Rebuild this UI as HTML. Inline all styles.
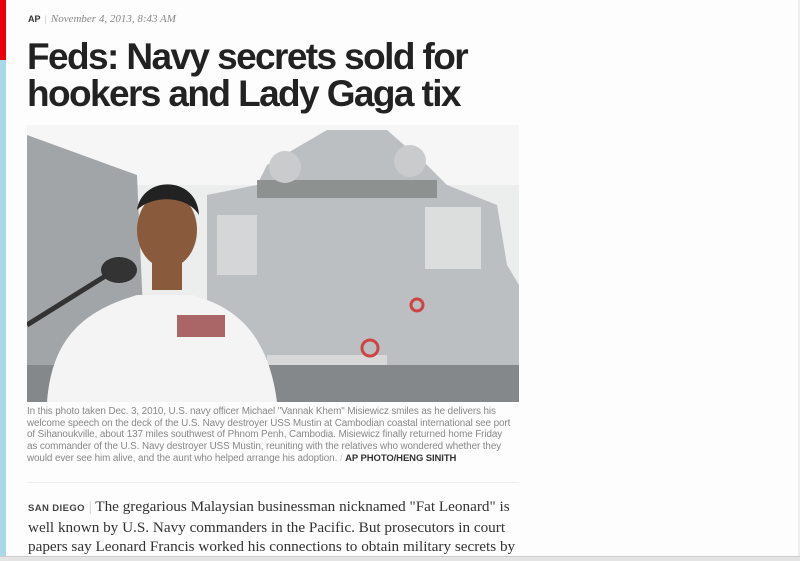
<!DOCTYPE html>
<html><head><meta charset="utf-8"><style>
body{margin:0;width:800px;height:560px;overflow:hidden;background:#fdfdfd;position:relative;font-family:"Liberation Sans",sans-serif}
.red{position:absolute;left:0;top:0;width:6px;height:60px;background:#e8000b}
.blue{position:absolute;left:0;top:60px;width:6px;height:500px;background:#a9d8e8}
.meta{position:absolute;left:28px;top:13px;font-size:9px;color:#333;font-weight:bold}
.meta i{font-family:"Liberation Serif",serif;font-weight:normal;color:#888;font-size:11px;margin-left:4px}
.meta span{color:#ccc;font-weight:normal;margin-left:4px}
h1{position:absolute;left:27px;top:38px;margin:0;font-size:37px;line-height:37px;letter-spacing:-1.6px;color:#222;font-weight:bold;width:520px}
.photo{position:absolute;left:27px;top:125px;width:492px;height:277px}
.cap{position:absolute;left:27px;top:406px;width:500px;font-size:9.9px;line-height:11.7px;color:#888;letter-spacing:-0.1px;white-space:nowrap}
.cap b{color:#333;font-size:9.5px}
.hr{position:absolute;left:27px;top:482px;width:492px;height:1px;background:#eee}
.body{position:absolute;left:28px;top:497px;width:492px;font-family:"Liberation Serif",serif;font-size:15.2px;line-height:19px;color:#333;height:59px;overflow:hidden}
.body small{font-family:"Liberation Sans",sans-serif;font-size:9.5px;font-weight:bold;color:#444;letter-spacing:.4px}
.bot{position:absolute;left:0;top:556px;width:800px;height:4px;background:#e4e4e4;border-top:1px solid #ccc}
.sb{position:absolute;left:798px;top:0;width:2px;height:556px;background:#eee}
</style></head><body>
<div class="red"></div><div class="blue"></div><div class="sb"></div>
<div class="meta">AP<span>|</span><i>November 4, 2013, 8:43 AM</i></div>
<h1>Feds: Navy secrets sold for hookers and Lady Gaga tix</h1>
<svg class="photo" viewBox="0 0 492 277">
<rect width="492" height="277" fill="#eceded"/>
<rect x="0" y="0" width="492" height="60" fill="#f6f6f7"/>
<polygon points="0,10 110,50 120,277 0,277" fill="#a2a5a7"/>
<polygon points="180,70 230,60 240,40 300,5 360,5 400,40 420,60 470,80 480,140 492,160 492,277 180,277" fill="#bcbfc1"/>
<rect x="230" y="55" width="180" height="18" fill="#8d9190"/>
<circle cx="258" cy="42" r="16" fill="#c9cbcc"/><circle cx="383" cy="36" r="16" fill="#c9cbcc"/>
<rect x="398" y="82" width="56" height="62" fill="#dcdddd"/>
<rect x="190" y="90" width="40" height="60" fill="#d5d6d7"/>
<rect x="240" y="230" width="120" height="40" fill="#d8d8d8"/>
<rect x="0" y="240" width="492" height="37" fill="#85888a"/>
<circle cx="343" cy="223" r="8" fill="none" stroke="#c44" stroke-width="3"/>
<circle cx="390" cy="180" r="6" fill="none" stroke="#c44" stroke-width="3"/>
<path d="M20,277 C25,210 60,185 110,170 L165,170 C200,180 240,200 250,277Z" fill="#f4f4f4"/>
<ellipse cx="140" cy="105" rx="30" ry="38" fill="#8a5a3c"/>
<path d="M110,85 C115,50 170,50 172,90 C160,70 125,70 110,85Z" fill="#222"/>
<rect x="125" y="135" width="30" height="30" fill="#8a5a3c"/>
<rect x="150" y="190" width="48" height="22" fill="#a66"/>
<line x1="0" y1="200" x2="80" y2="150" stroke="#333" stroke-width="5"/>
<ellipse cx="92" cy="145" rx="18" ry="13" fill="#333"/>
</svg>
<div class="cap">In this photo taken Dec. 3, 2010, U.S. navy officer Michael "Vannak Khem" Misiewicz smiles as he delivers his<br>welcome speech on the deck of the U.S. Navy destroyer USS Mustin at Cambodian coastal international see port<br>of Sihanoukville, about 137 miles southwest of Phnom Penh, Cambodia. Misiewicz finally returned home Friday<br>as commander of the U.S. Navy destroyer USS Mustin, reuniting with the relatives who wondered whether they<br>would ever see him alive, and the aunt who helped arrange his adoption. <span style="color:#ccc">/</span> <b>AP PHOTO/HENG SINITH</b></div>
<div class="hr"></div>
<div class="body"><small>SAN DIEGO</small> <span style="color:#ccc">|</span> The gregarious Malaysian businessman nicknamed "Fat Leonard" is<br>well known by U.S. Navy commanders in the Pacific. But prosecutors in court<br>papers say Leonard Francis worked his connections to obtain military secrets by<br>arranging prostitutes, Lady Gaga tickets and other bribes for a U.S. commander.</div>
<div class="bot"></div>
</body></html>
